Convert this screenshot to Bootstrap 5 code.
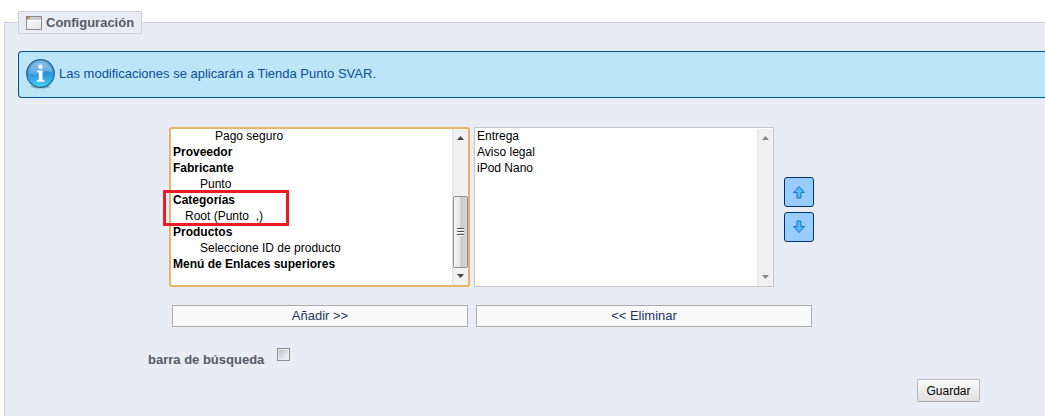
<!DOCTYPE html>
<html lang="es">
<head>
<meta charset="utf-8">
<meta name="viewport" content="width=device-width, initial-scale=1">
<title>Configuración</title>
<link href="https://cdn.jsdelivr.net/npm/bootstrap@5.3.0/dist/css/bootstrap.min.css" rel="stylesheet">
<style>
body { font-family: "Liberation Sans", Arial, sans-serif; font-size: 13px; line-height: 16px; color: #000; background: #fff; }
.panel { margin: 11px 0 0 4px; padding: 0 0 12px 13px; border: 1px solid #ccced9; border-width: 1px 0 0 1px; background: #e9ecf4; }
.panel-title { height: 23px; padding: 0 7px; font-size: 13px; line-height: 16px; font-weight: bold; color: #585a69; border: 1px solid #ccced9; background: #e9ecf4; }
.notice { margin-top: 17px; height: 47px; padding: 0 7px 2px; color: #0c4f94; background: #bde5f8; border: 1px solid #00529b; border-right: 0; border-radius: 4px 0 0 4px; }
.menu-form { margin: 29px 0 0 151px; }
.list-box { width: 300px; height: 160px; padding-top: 1px; border: 1px solid #c6c6c6; background: #fff; }
.list-box.active { width: 301px; padding-top: 0; border: 2px solid #e3b565; border-radius: 3px; }
.list-box select { min-width: 0; padding: 0; border: 0; outline: 0; background: #fff; font-size: 12px; line-height: 16px; color: #000; overflow: hidden; }
.list-box option, .list-box optgroup { height: auto; min-height: 16px; padding: 0 2px; line-height: 16px; }
.list-box optgroup { padding: 0; }
.list-box optgroup.filled { height: 32px; }
.list-box optgroup option { padding-top: 1px; }
.list-box option::before { content: none; }
.list-box .lv-1 { padding-left: 14px; }
.list-box .lv-2 { padding-left: 29px; }
.list-box .lv-3 { padding-left: 44px; }
.scroll-track { width: 16px; padding: 7px 0; background: #f0f0f0; border-left: 1px solid #e4e4e4; }
.scroll-thumb { width: 15px; height: 72px; margin-bottom: 6px; border: 1px solid #8e8e8e; border-radius: 2px; background: linear-gradient(90deg, #f6f6f6, #e4e4e6 45%, #c9c9cc 55%, #d9d9dc); }
.highlight { left: -8px; top: 61px; width: 126px; height: 36px; border: 3px solid #ed1c24; pointer-events: none; }
.movers { gap: 5px; margin-left: 10px; padding-top: 4px; }
.move { width: 30px; height: 30px; border: 1px solid #003366; border-radius: 3px; background: #99ccff; }
.transfer { margin: 18px 0 0 3px; }
.wide { height: 22px; font-size: 13px; line-height: 16px; color: #1c355e; background: #fafafa; border: 1px solid #aaa; border-radius: 0; }
.wide-add { width: 296px; }
.wide-del { width: 336px; }
.search-row { margin: 21px 0 0 130px; gap: 13px; color: #585a69; }
.tick { appearance: none; width: 13px; height: 13px; border: 1px solid #8e8f8f; background: linear-gradient(135deg, #bfc4cb, #f3f3f3) content-box #f4f4f4; padding: 1px; }
.save-row { margin: 11px 65px 0 0; }
.save { height: 23px; width: 63px; font-size: 12px; line-height: 16px; color: #000; border: 1px solid #b9b9b9; border-bottom-color: #a8a8a8; border-radius: 2px; background: linear-gradient(#fafafa, #e0e0e0); }
</style>
</head>
<body class="d-flex flex-column min-vh-100">
<fieldset class="panel flex-grow-1">
  <legend class="panel-title float-none w-auto d-flex align-items-center gap-1 mb-0">
    <svg width="16" height="14" viewBox="0 0 16 14" aria-hidden="true">
      <defs><linearGradient id="win" x2="1" y2="1"><stop stop-color="#fff"/><stop offset="1" stop-color="#e3e3e3"/></linearGradient></defs>
      <rect x=".5" y=".5" width="15" height="13" fill="url(#win)" stroke="#8b8b8b"/>
      <path d="M1 2.500h14" stroke="#cdd0d1" stroke-width="3"/><path d="M1 4.500h14" stroke="#fff"/>
      <path d="M1 1h1v2H1z" fill="#e3402e"/><path d="M2 1h1v2H2z" fill="#e6b72c"/><path d="M3 1h1v2H3z" fill="#67b545"/>
    </svg>
    <span>Configuración</span>
  </legend>

  <div class="notice d-flex align-items-center gap-1" role="status">
    <svg class="flex-shrink-0" width="29" height="30" viewBox="0 0 29 30" aria-hidden="true">
      <defs><linearGradient id="orb" x2="0" y2="1"><stop stop-color="#78b5e5"/><stop offset=".5" stop-color="#2b91da"/><stop offset="1" stop-color="#43d4f6"/></linearGradient></defs>
      <ellipse cx="14.500" cy="27.500" rx="10" ry="2" fill="#738f9c" opacity=".6"/>
      <circle cx="14.500" cy="14.500" r="13.800" fill="url(#orb)" stroke="#28658f" stroke-width="1.200"/>
      <path d="M2.200 14A12.400 12.400 0 0 1 26.800 14Q21 10 14 14Q8 17 2.200 14z" fill="#fff" opacity=".22"/>
      <circle cx="14.500" cy="7.800" r="2.200" fill="#fff"/>
      <path d="M11 11.500h5.500v9.300l2 .5v1.400h-7.700v-1.400l2-.5v-7.300l-1.800-.5z" fill="#fff"/>
    </svg>
    <span>Las modificaciones se aplicarán a Tienda Punto SVAR.</span>
  </div>

  <form>
    <div class="menu-form">
      <div class="d-flex align-items-center">
        <div class="list-box active d-flex position-relative">
          <select class="flex-grow-1 h-100" multiple size="9" aria-label="Elementos disponibles">
            <option class="lv-3">Pago seguro</option>
            <optgroup label="Proveedor"></optgroup>
            <optgroup class="filled" label="Fabricante"><option class="lv-2">Punto</option></optgroup>
            <optgroup class="filled" label="Categorías"><option class="lv-1">Root (Punto&nbsp;&nbsp;,)</option></optgroup>
            <optgroup class="filled" label="Productos"><option class="lv-2">Seleccione ID de producto</option></optgroup>
            <optgroup label="Menú de Enlaces superiores"></optgroup>
          </select>
          <div class="scroll-track d-flex flex-column align-items-center" aria-hidden="true">
            <svg width="7" height="4" viewBox="0 0 7 4"><path d="M0 4L3.500 0L7 4z" fill="#444"/></svg>
            <div class="scroll-thumb mt-auto d-flex align-items-center justify-content-center">
              <svg width="7" height="8" viewBox="0 0 7 8"><path d="M0 .5h7M0 3.500h7M0 6.500h7" stroke="#555"/><path d="M0 1.500h7M0 4.500h7M0 7.500h7" stroke="#fff"/></svg>
            </div>
            <svg width="7" height="4" viewBox="0 0 7 4"><path d="M0 0L3.500 4L7 0z" fill="#444"/></svg>
          </div>
          <div class="highlight position-absolute"></div>
        </div>
        <div class="list-box d-flex ms-1">
          <select class="flex-grow-1 h-100" multiple size="9" aria-label="Elementos del menú">
            <option>Entrega</option>
            <option>Aviso legal</option>
            <option>iPod Nano</option>
          </select>
          <div class="scroll-track d-flex flex-column align-items-center justify-content-between" aria-hidden="true">
            <svg width="7" height="4" viewBox="0 0 7 4"><path d="M0 4L3.500 0L7 4z" fill="#888"/></svg>
            <svg width="7" height="4" viewBox="0 0 7 4"><path d="M0 0L3.500 4L7 0z" fill="#888"/></svg>
          </div>
        </div>
        <div class="movers d-flex flex-column">
          <button type="button" class="move btn p-0 d-flex align-items-center justify-content-center" aria-label="Subir">
            <svg width="14" height="14" viewBox="0 0 14 14"><path d="M7 1.500L12.500 7.500H9V13H5V7.500H1.500z" fill="#4fb8f5" stroke="#2070b8" stroke-linejoin="round"/></svg>
          </button>
          <button type="button" class="move btn p-0 d-flex align-items-center justify-content-center" aria-label="Bajar">
            <svg width="14" height="14" viewBox="0 0 14 14"><path d="M7 12.500L12.500 6.500H9V1H5V6.500H1.500z" fill="#4fb8f5" stroke="#2070b8" stroke-linejoin="round"/></svg>
          </button>
        </div>
      </div>
      <div class="transfer d-flex gap-2">
        <button type="button" class="wide wide-add btn p-0">Añadir &gt;&gt;</button>
        <button type="button" class="wide wide-del btn p-0">&lt;&lt; Eliminar</button>
      </div>
    </div>
    <div class="search-row d-flex align-items-start">
      <label class="fw-bold pt-1" for="search">barra de búsqueda</label>
      <input class="tick" type="checkbox" id="search">
    </div>
    <div class="save-row d-flex justify-content-end">
      <button type="submit" class="save btn p-0">Guardar</button>
    </div>
  </form>
</fieldset>
<script src="https://cdn.jsdelivr.net/npm/bootstrap@5.3.0/dist/js/bootstrap.bundle.min.js"></script>
</body>
</html>
